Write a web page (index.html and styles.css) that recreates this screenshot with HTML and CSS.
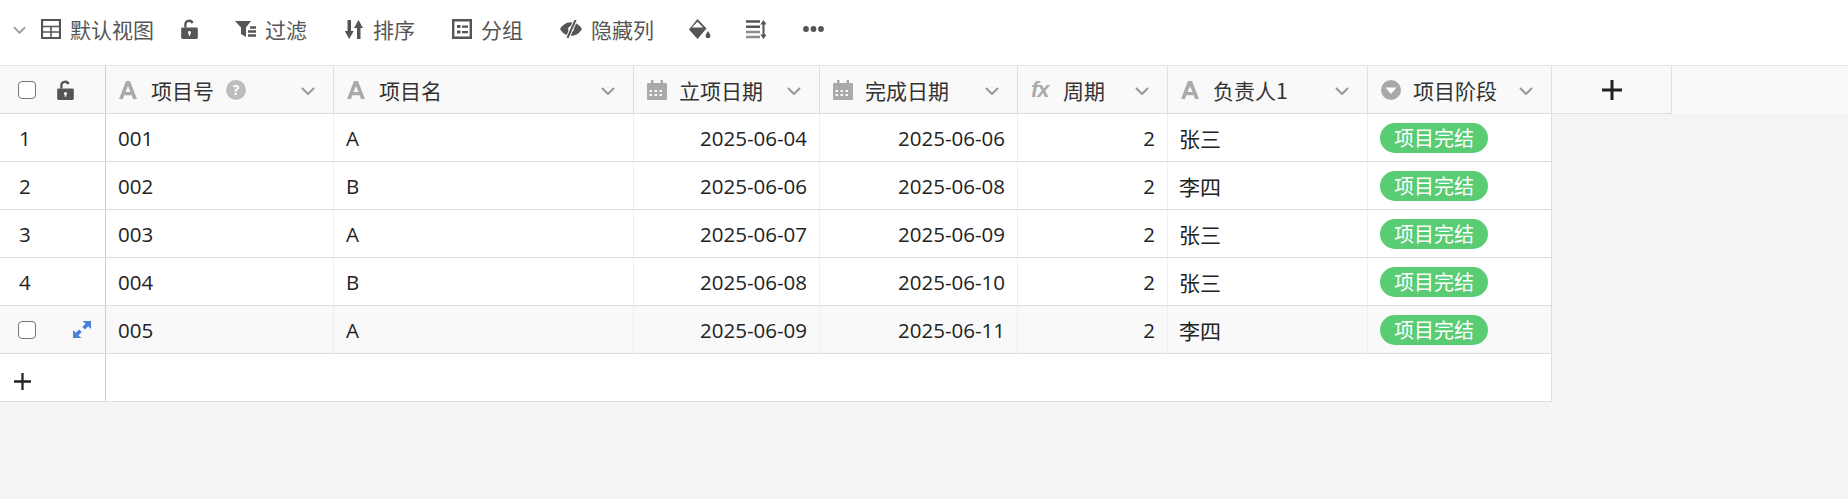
FILE: index.html
```html
<!DOCTYPE html>
<html>
<head>
<meta charset="UTF-8">
<title>默认视图</title>
<link rel="stylesheet" href="styles.css">
</head>
<body>
 <svg class="defs" width="0" height="0">
  <defs>
   <symbol id="chev" viewBox="0 0 14 8"><path d="M1 1l6 6 6-6" fill="none" stroke="currentColor" stroke-width="2"/></symbol>
   <symbol id="lock" viewBox="0 0 16 19"><path d="M3 8V5.200a4.600 4.600 0 0 1 8.900-1.700l-2.100.8A2.400 2.400 0 0 0 5.200 5.200V8z" fill="currentColor"/><path fill-rule="evenodd" d="M1.500 8h13a1.400 1.400 0 0 1 1.400 1.400v8.200a1.400 1.400 0 0 1-1.400 1.400h-13A1.400 1.400 0 0 1 .1 17.600V9.400A1.400 1.400 0 0 1 1.500 8zM8 11.400a1.500 1.500 0 0 0-.7 2.800V16h1.400v-1.800A1.500 1.500 0 0 0 8 11.400z" fill="currentColor"/></symbol>
   <symbol id="letter" viewBox="0 0 18 18"><path d="M7 0h4l7 18h-4l-1.300-3.800H5.300L4 18H0zM9 5l-2.500 6h5z" fill="currentColor" fill-rule="evenodd"/></symbol>
   <symbol id="cal" viewBox="0 0 20 20"><path fill-rule="evenodd" d="M1 3h3V0h2.500v3h7V0H16v3h3a1 1 0 0 1 1 1v15a1 1 0 0 1-1 1H1a1 1 0 0 1-1-1V4a1 1 0 0 1 1-1zm1.500 7v2H5v-2zm5 0v2h2.500v-2zm5 0v2H15v-2zm-10 4v2H5v-2zm5 0v2h2.500v-2zm5 0v2H15v-2z" fill="currentColor"/></symbol>
  </defs>
 </svg>

 <div class="toolbar">
  <svg class="tb-chev"><use href="#chev"/></svg>
  <svg class="tb-table" viewBox="0 0 20 20"><path d="M1 1h18v18H1z" fill="none" stroke="currentColor" stroke-width="2.200"/><path d="M1 7.500h18M1 13h18M10 7.500V19" fill="none" stroke="currentColor" stroke-width="1.600"/></svg>
  <span class="tb-view">默认视图</span>
  <svg class="tb-lock"><use href="#lock"/></svg>
  <div class="tb-item">
   <svg class="tb-icon" viewBox="0 0 21 16"><path d="M0 0h16l-5 6.500V16L6 13V6.500z" fill="currentColor"/><path d="M15 6.500h6M13 10.500h8M13 14.500h8" stroke="currentColor" stroke-width="2.400"/></svg>
   <span>过滤</span>
  </div>
  <div class="tb-item">
   <svg class="tb-icon tb-sort" viewBox="0 0 18 19"><path d="M2.500 0h3.500v11h2.700l-4.500 8-4.500-8h2.800zM12 19h3.500V8h2.500l-4.500-8L9 8h3z" fill="currentColor"/></svg>
   <span>排序</span>
  </div>
  <div class="tb-item">
   <svg class="tb-icon tb-group" viewBox="0 0 20 20"><path d="M1.200 1.200h17.600v17.600H1.200z" fill="none" stroke="currentColor" stroke-width="2.400"/><path d="M5 6h3.500v3H5zM5 11.500h3.500v3H5zM10 6.500h6v2.200h-6zM10 12h6v2.200h-6z" fill="currentColor"/></svg>
   <span>分组</span>
  </div>
  <div class="tb-item">
   <svg class="tb-icon tb-eye" viewBox="0 0 22 18"><path d="M0 9c2.500-4 6-6.800 11-6.800S19.500 5 22 9c-2.500 4-6 6.800-11 6.800S2.500 13 0 9z" fill="currentColor"/><circle cx="11" cy="9" r="2.800" fill="#fff"/><path d="M15.500 0L7.500 18" stroke="#fff" stroke-width="4"/><path d="M15.500 0L7.500 18" stroke="currentColor" stroke-width="2"/></svg>
   <span>隐藏列</span>
  </div>
  <svg class="tb-bucket" viewBox="0 0 22 20"><path d="M8.500 0L17.500 9.500 8.500 20 0 10.500z" fill="currentColor"/><path d="M8.500 2.800L14.200 8.600H2.800z" fill="#fff"/><path d="M19 12c1.300 2 2.400 3.400 2.400 4.900a2.400 2.400 0 0 1-4.800 0c0-1.500 1.100-2.900 2.400-4.900z" fill="currentColor"/></svg>
  <svg class="tb-rows" viewBox="0 0 20 19"><path d="M0 1.500h14M0 6.700h14" stroke="currentColor" stroke-width="2.600"/><path d="M0 12h14M0 17h14" stroke="#8c8c8c" stroke-width="2.600"/><path d="M17.500 2v15" stroke="currentColor" stroke-width="2"/><path d="M14.300 4.500l3.200-4.500 3.200 4.500zM14.300 14.500l3.200 4.500 3.200-4.500z" fill="currentColor"/></svg>
  <svg class="tb-more" viewBox="0 0 21 6"><circle cx="3" cy="3" r="2.900" fill="currentColor"/><circle cx="10.500" cy="3" r="2.900" fill="currentColor"/><circle cx="18" cy="3" r="2.900" fill="currentColor"/></svg>
 </div>

 <div class="head-row">
  <div class="col-index head-cell">
   <span class="check"></span>
   <svg class="head-lock"><use href="#lock"/></svg>
  </div>
  <div class="head-cell">
   <svg class="f-icon"><use href="#letter"/></svg>
   <span class="f-name">项目号</span>
   <span class="help">?</span>
   <svg class="f-chev"><use href="#chev"/></svg>
  </div>
  <div class="head-cell">
   <svg class="f-icon"><use href="#letter"/></svg>
   <span class="f-name">项目名</span>
   <svg class="f-chev"><use href="#chev"/></svg>
  </div>
  <div class="head-cell">
   <svg class="f-cal"><use href="#cal"/></svg>
   <span class="f-name">立项日期</span>
   <svg class="f-chev"><use href="#chev"/></svg>
  </div>
  <div class="head-cell">
   <svg class="f-cal"><use href="#cal"/></svg>
   <span class="f-name">完成日期</span>
   <svg class="f-chev"><use href="#chev"/></svg>
  </div>
  <div class="head-cell">
   <span class="f-fx">fx</span>
   <span class="f-name">周期</span>
   <svg class="f-chev"><use href="#chev"/></svg>
  </div>
  <div class="head-cell">
   <svg class="f-icon"><use href="#letter"/></svg>
   <span class="f-name">负责人1</span>
   <svg class="f-chev"><use href="#chev"/></svg>
  </div>
  <div class="head-cell">
   <svg class="f-cal" viewBox="0 0 20 20"><circle cx="10" cy="10" r="10" fill="#a8a8a8"/><path d="M4.500 7.500h11L10 14z" fill="#fff"/></svg>
   <span class="f-name">项目阶段</span>
   <svg class="f-chev"><use href="#chev"/></svg>
  </div>
  <div class="head-cell head-add">
   <svg class="add-col" viewBox="0 0 20 20"><path d="M10 0v20M0 10h20" stroke="currentColor" stroke-width="3"/></svg>
  </div>
 </div>

 <div class="row">
  <div class="col-index cell">1</div>
  <div class="cell">001</div>
  <div class="cell">A</div>
  <div class="cell num">2025-06-04</div>
  <div class="cell num">2025-06-06</div>
  <div class="cell num">2</div>
  <div class="cell cjk">张三</div>
  <div class="cell"><span class="pill">项目完结</span></div>
 </div>
 <div class="row">
  <div class="col-index cell">2</div>
  <div class="cell">002</div>
  <div class="cell">B</div>
  <div class="cell num">2025-06-06</div>
  <div class="cell num">2025-06-08</div>
  <div class="cell num">2</div>
  <div class="cell cjk">李四</div>
  <div class="cell"><span class="pill">项目完结</span></div>
 </div>
 <div class="row">
  <div class="col-index cell">3</div>
  <div class="cell">003</div>
  <div class="cell">A</div>
  <div class="cell num">2025-06-07</div>
  <div class="cell num">2025-06-09</div>
  <div class="cell num">2</div>
  <div class="cell cjk">张三</div>
  <div class="cell"><span class="pill">项目完结</span></div>
 </div>
 <div class="row">
  <div class="col-index cell">4</div>
  <div class="cell">004</div>
  <div class="cell">B</div>
  <div class="cell num">2025-06-08</div>
  <div class="cell num">2025-06-10</div>
  <div class="cell num">2</div>
  <div class="cell cjk">张三</div>
  <div class="cell"><span class="pill">项目完结</span></div>
 </div>
 <div class="row row-hover">
  <div class="col-index cell">
   <span class="check"></span>
   <svg class="expand" viewBox="0 0 18 17"><path d="M9.500 0H18v8l-2.800-2.800-3.300 3.300-2.600-2.600 3.300-3.300zM8.500 17H0V9l2.800 2.800 3.300-3.300 2.600 2.600-3.300 3.300z" fill="#4a80d8"/></svg>
  </div>
  <div class="cell">005</div>
  <div class="cell">A</div>
  <div class="cell num">2025-06-09</div>
  <div class="cell num">2025-06-11</div>
  <div class="cell num">2</div>
  <div class="cell cjk">李四</div>
  <div class="cell"><span class="pill">项目完结</span></div>
 </div>
 <div class="add-row">
  <div class="col-index add-cell">
   <svg class="add-icon" viewBox="0 0 18 18"><path d="M9 0v18M0 9h18" stroke="currentColor" stroke-width="2.400"/></svg>
  </div>
 </div>
</body>
</html>
```

FILE: styles.css
```css
html, body {
 margin: 0;
 height: 100%;
 overflow: hidden;
}
body {
 background-color: #f4f4f4;
 font-family: "Open Sans", "Noto Sans CJK SC", sans-serif;
 font-size: 20.5px;
 color: #222;
}
svg {
 display: block;
 flex: none;
}
.defs {
 position: absolute;
}

/* toolbar */
.toolbar {
 display: flex;
 align-items: center;
 height: 65px;
 padding: 0 0 7px 13px;
 box-sizing: border-box;
 background-color: #fff;
 color: #555;
 font-family: "Noto Sans CJK SC", sans-serif;
 font-size: 21px;
}
.tb-chev {
 width: 13px;
 height: 8px;
 margin-top: 2px;
 color: #999;
}
.tb-table {
 width: 20px;
 height: 20px;
 margin-left: 15px;
}
.tb-view {
 margin-left: 9px;
 width: 84px;
 white-space: nowrap;
 line-height: 30px;
}
.tb-lock {
 width: 17px;
 height: 20px;
 margin-left: 27px;
}
.tb-item {
 display: flex;
 align-items: center;
 gap: 9px;
 margin-left: 37px;
}
.tb-icon {
 width: 21px;
 height: 16px;
}
.tb-sort {
 width: 18px;
 height: 19px;
 margin-left: 1px;
 margin-right: 1px;
}
.tb-group {
 width: 20px;
 height: 20px;
}
.tb-eye {
 width: 22px;
 height: 18px;
}
.tb-bucket {
 width: 22px;
 height: 20px;
 margin-left: 35px;
}
.tb-rows {
 width: 20px;
 height: 19px;
 margin-left: 35px;
}
.tb-more {
 width: 21px;
 height: 6px;
 margin-left: 37px;
}

/* grid columns are shared by the header and the rows */
.head-row, .row {
 display: grid;
 grid-template-columns: 106px 228px 300px 186px 198px 150px 200px 184px;
}
.head-row {
 grid-template-columns: 106px 228px 300px 186px 198px 150px 200px 184px 120px;
 height: 49px;
 box-sizing: border-box;
 border-top: 1px solid #e4e4e4;
 background-color: #f9f9f9;
}
.head-cell {
 display: flex;
 align-items: center;
 padding-left: 13px;
 box-sizing: border-box;
 background-color: #f9f9f9;
 border-right: 1px solid #dedede;
 border-bottom: 1px solid #dedede;
 min-width: 0;
}
.col-index {
 border-right: 1px solid #cfcfcf;
}
.check {
 flex: none;
 width: 18px;
 height: 18px;
 margin-left: 5px;
 margin-top: 1px;
 box-sizing: border-box;
 border: 1.5px solid #777;
 border-radius: 4px;
 background-color: #fff;
}
.head-lock {
 width: 17px;
 height: 20px;
 margin-left: 21px;
 color: #555;
}
.f-icon {
 width: 18px;
 height: 18px;
 color: #aaa;
}
.f-cal {
 width: 20px;
 height: 20px;
 margin-right: -2px;
 color: #aaa;
}
.f-fx {
 width: 20px;
 margin-right: -2px;
 color: #aaa;
 font: italic bold 22px "Liberation Sans", sans-serif;
 letter-spacing: -1px;
}
.f-name {
 margin-left: 14px;
 white-space: nowrap;
 font-family: "Noto Sans CJK SC", sans-serif;
 font-size: 21px;
 color: #333;
}
.help {
 width: 20px;
 height: 20px;
 margin-left: 12px;
 border-radius: 50%;
 background-color: #bdbdbd;
 color: #fff;
 font: bold 14px/20px "Open Sans", sans-serif;
 text-align: center;
}
.f-chev {
 width: 14px;
 height: 8px;
 margin-left: auto;
 margin-right: 18px;
 margin-top: 3px;
 color: #999;
}
.head-add {
 justify-content: center;
 padding-left: 0;
}
.add-col {
 width: 20px;
 height: 20px;
 color: #222;
}

/* rows */
.row {
 height: 48px;
 width: 1552px;
}
.cell {
 display: flex;
 align-items: center;
 padding: 0 12px;
 box-sizing: border-box;
 background-color: #fff;
 border-right: 1px solid #efefef;
 border-bottom: 1px solid #dedede;
 white-space: nowrap;
}
.cjk {
 padding-left: 11px;
 font-family: "Noto Sans CJK SC", sans-serif;
 font-size: 21px;
}
.row .cell:last-child {
 border-right-color: #dedede;
}
.row .col-index {
 border-right-color: #cfcfcf;
 padding-left: 19px;
}
.row-hover .cell {
 background-color: #f9f9f9;
}
.row .cell.col-index:has(.check) {
 padding-left: 13px;
}
.num {
 justify-content: flex-end;
}
.pill {
 height: 30px;
 padding: 0 14px;
 border-radius: 15px;
 background-color: #5acc74;
 color: #fff;
 font-family: "Noto Sans CJK SC", sans-serif;
 font-size: 20px;
 line-height: 29px;
}
.expand {
 width: 18px;
 height: 17px;
 margin-left: 37px;
}
.add-row {
 display: flex;
 width: 1552px;
 height: 48px;
 box-sizing: border-box;
 background-color: #fff;
 border-right: 1px solid #dedede;
 border-bottom: 1px solid #dedede;
}
.add-cell {
 display: flex;
 align-items: center;
 width: 106px;
 padding-left: 14px;
 box-sizing: border-box;
}
.add-icon {
 width: 17px;
 height: 17px;
 margin-top: 8px;
 color: #222;
}
```
